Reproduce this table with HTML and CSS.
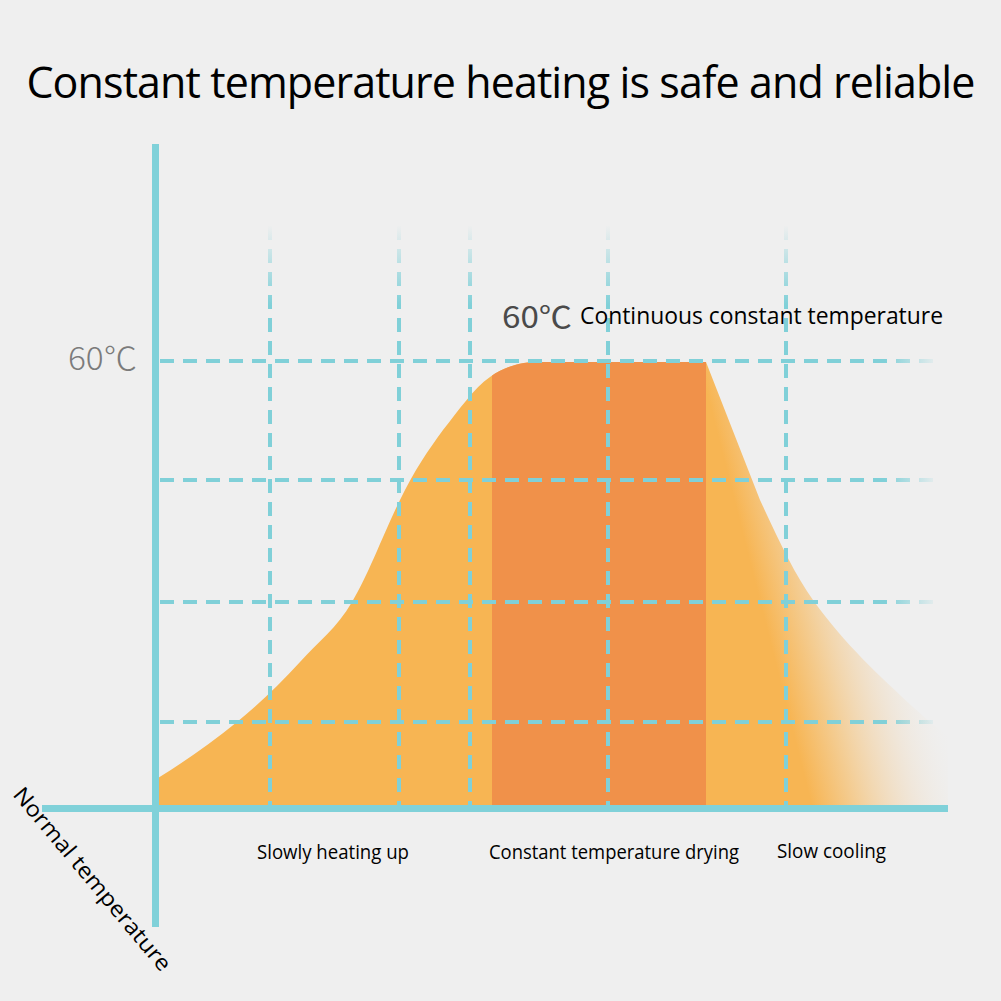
FILE: index.html
```html
<!DOCTYPE html>
<html lang="en">
<head>
<meta charset="utf-8">
<title>Constant temperature heating</title>
<link rel="stylesheet" href="styles.css">
</head>
<body>
<main class="poster">
  <h1 class="title">Constant temperature heating is safe and reliable</h1>
  <svg class="chart" width="1001" height="871" viewBox="0 130 1001 871" xmlns="http://www.w3.org/2000/svg">
    <defs>
      <linearGradient id="fadeFill" gradientUnits="userSpaceOnUse" x1="785" y1="700" x2="935" y2="662">
        <stop offset="0" stop-color="#f7b553" stop-opacity="1"/>
        <stop offset="0.3" stop-color="#f7b553" stop-opacity="0.55"/>
        <stop offset="0.65" stop-color="#f3c88f" stop-opacity="0.22"/>
        <stop offset="1" stop-color="#efefef" stop-opacity="0"/>
      </linearGradient>
      <linearGradient id="fadeRight" gradientUnits="userSpaceOnUse" x1="885" y1="0" x2="940" y2="0">
        <stop offset="0" stop-color="#80d0d8" stop-opacity="1"/>
        <stop offset="1" stop-color="#80d0d8" stop-opacity="0"/>
      </linearGradient>
      <linearGradient id="fadeTop" gradientUnits="userSpaceOnUse" x1="0" y1="225" x2="0" y2="305">
        <stop offset="0" stop-color="#80d0d8" stop-opacity="0"/>
        <stop offset="1" stop-color="#80d0d8" stop-opacity="1"/>
      </linearGradient>
      <clipPath id="curveClip">
        <path d="M158,805 L158,778 C184,762 211,743 237,722 C258,705 279,685 300,662 C318,642 337,628 352,602 C368,576 384,532 400,500 C414,471 429,449 443,430 C459,410 474,388 490,377 C507,365 523,362 540,362 L706,362 L760,500 C778,539 795,575 813,600 C846,646 880,676 913,707 C925,718 937,728 948,736 L948,805 Z"/>
      </clipPath>
    </defs>

    <path class="curve" d="M158,805 L158,778 C184,762 211,743 237,722 C258,705 279,685 300,662 C318,642 337,628 352,602 C368,576 384,532 400,500 C414,471 429,449 443,430 C459,410 474,388 490,377 C507,365 523,362 540,362 L706,362 L760,500 C778,539 795,575 813,600 C846,646 880,676 913,707 C925,718 937,728 948,736 L948,805 Z"/>
    <rect class="plateau" x="492" y="355" width="214" height="452" clip-path="url(#curveClip)"/>

    <g class="grid-h">
      <line x1="160" y1="361" x2="945" y2="361"/>
      <line x1="160" y1="480" x2="945" y2="480"/>
      <line x1="160" y1="602" x2="945" y2="602"/>
      <line x1="160" y1="722" x2="945" y2="722"/>
    </g>
    <g class="grid-v">
      <line x1="270" y1="226" x2="270" y2="810"/>
      <line x1="399" y1="226" x2="399" y2="810"/>
      <line x1="470" y1="226" x2="470" y2="810"/>
      <line x1="608" y1="226" x2="608" y2="810"/>
      <line x1="786" y1="226" x2="786" y2="810"/>
    </g>

    <rect class="axis" x="152" y="144" width="7" height="783"/>
    <rect class="axis" x="42" y="805" width="906" height="7"/>

    <text class="deg-axis" x="68" y="370" textLength="69" lengthAdjust="spacingAndGlyphs">60℃</text>
    <text class="deg-top" x="502" y="328" textLength="70" lengthAdjust="spacingAndGlyphs">60℃</text>
    <text class="note" x="580" y="324" textLength="363" lengthAdjust="spacingAndGlyphs">Continuous constant temperature</text>

    <text class="label" x="257" y="859" textLength="152" lengthAdjust="spacingAndGlyphs">Slowly heating up</text>
    <text class="label" x="489" y="859" textLength="250" lengthAdjust="spacingAndGlyphs">Constant temperature drying</text>
    <text class="label" x="777" y="858" textLength="109" lengthAdjust="spacingAndGlyphs">Slow cooling</text>

    <text class="normal" transform="translate(12 795) rotate(50)" x="0" y="0" textLength="232" lengthAdjust="spacingAndGlyphs">Normal temperature</text>
  </svg>
</main>
</body>
</html>
```
FILE: styles.css
```css
html, body {
  margin: 0;
  padding: 0;
  background: #efefef;
}

.poster {
  width: 1001px;
  height: 1001px;
  display: flex;
  flex-direction: column;
  overflow: hidden;
  background: #efefef;
}

.title {
  margin: 0;
  height: 130px;
  box-sizing: border-box;
  padding-top: 60px;
  font-family: "Open Sans", "Noto Sans", sans-serif;
  font-weight: 400;
  font-size: 43px;
  line-height: 43px;
  letter-spacing: -0.9px;
  text-align: center;
  color: #000;
  white-space: nowrap;
}

.chart {
  display: block;
  flex: none;
}

.curve {
  fill: url(#fadeFill);
}

.plateau {
  fill: #f0914a;
}

.grid-h line {
  stroke: url(#fadeRight);
  stroke-width: 4;
  stroke-dasharray: 14 9;
}

.grid-v line {
  stroke: url(#fadeTop);
  stroke-width: 4;
  stroke-dasharray: 14 9;
}

.axis {
  fill: #80d1d9;
}

.deg-axis {
  font-family: "Noto Sans CJK SC", sans-serif;
  font-weight: 300;
  font-size: 32px;
  fill: #7b7b7b;
}

.deg-top {
  font-family: "Noto Sans CJK SC", sans-serif;
  font-weight: 400;
  font-size: 30px;
  fill: #4a4a4a;
}

.note {
  font-family: "Open Sans", "Noto Sans", sans-serif;
  font-size: 23px;
  fill: #000;
}

.label {
  font-family: "Open Sans", "Noto Sans", sans-serif;
  font-size: 19.5px;
  fill: #000;
}

.normal {
  font-family: "Open Sans", "Noto Sans", sans-serif;
  font-size: 22px;
  fill: #000;
}
```
